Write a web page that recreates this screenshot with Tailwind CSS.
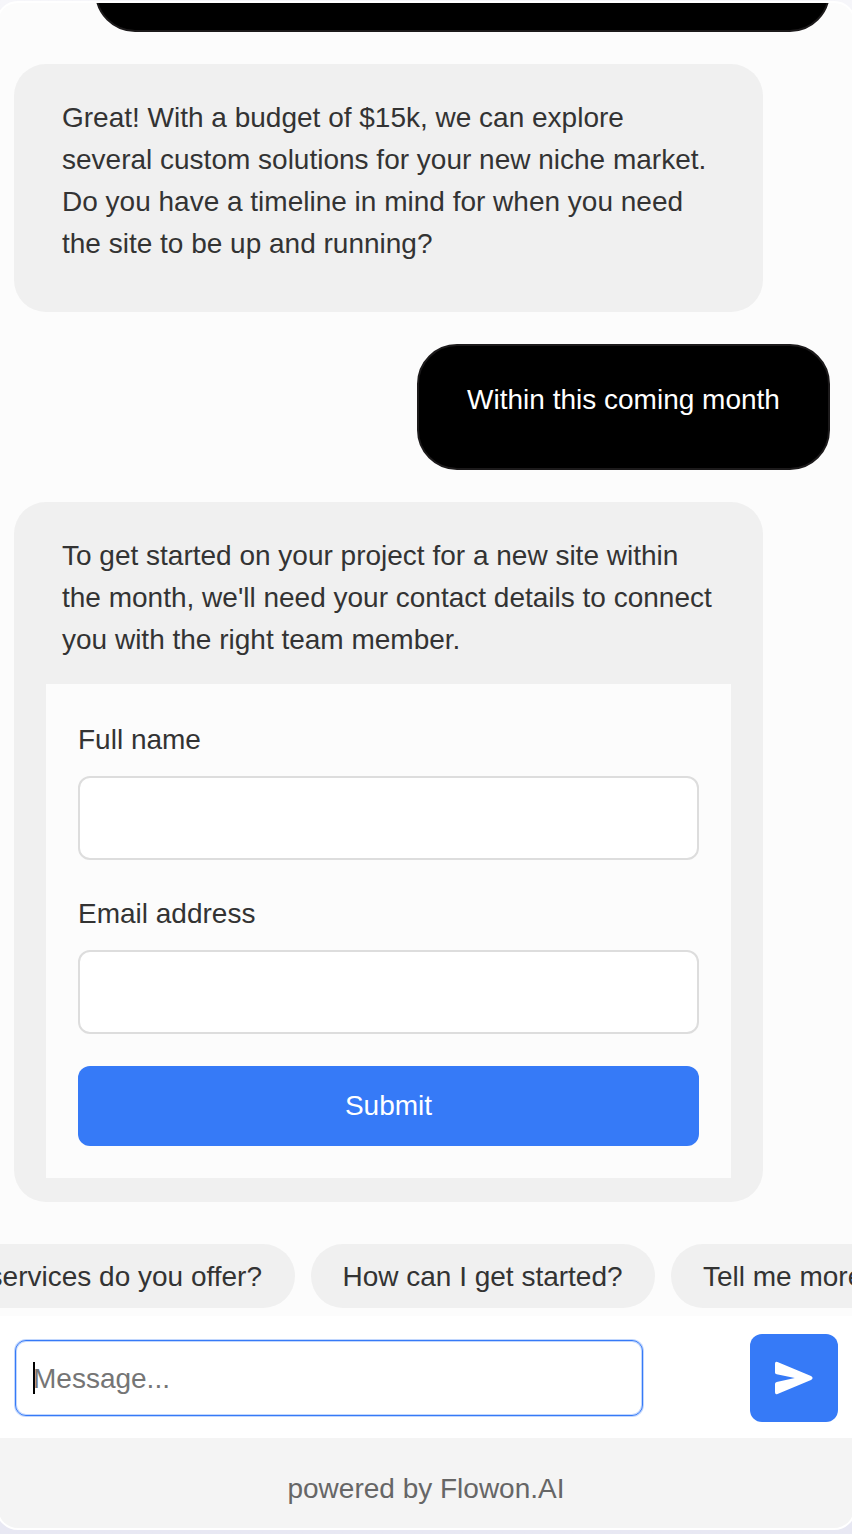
<!DOCTYPE html>
<html lang="en">
<head>
<meta charset="utf-8">
<title>Flowon.AI chat</title>
<script src="https://cdn.jsdelivr.net/npm/@tailwindcss/browser@4"></script>
</head>
<body class="h-[1534px] w-[852px] overflow-hidden bg-gradient-to-b from-[#f6f6fa] to-[#e8e8f3] pt-px font-['Liberation_Sans',Arial,sans-serif] text-[28px] leading-[42px] text-[#333]">
  <main class="-ml-1 flex h-[1529px] w-[860px] flex-col overflow-hidden rounded-[22px] border-2 border-white bg-white">
    <section class="flex h-[1313px] shrink-0 flex-col bg-[#fcfcfc] px-0.5">
      <div class="flex h-[1199px] flex-col gap-8 pl-3.5 pr-[22px]">
        <div class="flex h-[29px] w-[735px] shrink-0 items-end self-end overflow-hidden">
          <div class="h-[126px] w-full shrink-0 rounded-[40px] border-2 border-[#1c1a1b] bg-black"></div>
        </div>
        <div class="h-[248px] w-[749px] shrink-0 rounded-[32px] bg-[#f0f0f0] pl-12 pt-[33px]">
          <p>Great! With a budget of $15k, we can explore<br>several custom solutions for your new niche market.<br>Do you have a timeline in mind for when you need<br>the site to be up and running?</p>
        </div>
        <div class="h-[126px] w-[413px] shrink-0 self-end rounded-[40px] border-2 border-[#1c1a1b] bg-black pt-[33px] text-center text-white">Within this coming month</div>
        <div class="h-[700px] w-[749px] shrink-0 rounded-[32px] bg-[#f0f0f0] px-8 pt-[33px]">
          <p class="pl-4">To get started on your project for a new site within<br>the month, we'll need your contact details to connect<br>you with the right team member.</p>
          <form class="mt-[23px] flex h-[494px] flex-col bg-[#fcfcfc] px-8 pt-[35px]">
            <label for="name">Full name</label>
            <input id="name" class="mt-[15px] h-[84px] w-full rounded-xl border-2 border-[#ddd] bg-white px-4 outline-none">
            <label for="email" class="mt-[33px]">Email address</label>
            <input id="email" class="mt-[15px] h-[84px] w-full rounded-xl border-2 border-[#ddd] bg-white px-4 outline-none">
            <button type="button" class="mt-8 h-20 w-full rounded-xl bg-[#367af7] text-white">Submit</button>
          </form>
        </div>
      </div>
      <div class="mt-[42px] flex gap-4 whitespace-nowrap">
        <div class="flex h-16 w-[295px] shrink-0 items-center justify-end rounded-r-[32px] bg-[#f0f0f0] pr-[33px] pt-0.5"><span>What services do you offer?</span></div>
        <div class="flex h-16 w-[344px] shrink-0 items-center justify-center rounded-[32px] bg-[#f0f0f0] pr-px pt-0.5"><span>How can I get started?</span></div>
        <div class="flex h-16 w-[344px] shrink-0 items-center rounded-[32px] bg-[#f0f0f0] pl-8 pt-0.5"><span>Tell me more</span></div>
      </div>
    </section>
    <section class="flex h-[122px] shrink-0 items-start justify-between px-4 pt-[18px]">
      <div class="ml-px mt-[6px] flex h-[76px] w-[628px] items-center rounded-[11px] border border-[#367af7] bg-white pl-[17px] pt-0.5 text-[#757575] shadow-[0_0_0_1px_#367af74d,inset_0_0_0_1px_#367af74d]">
        <span class="-mt-0.5 h-8 w-0.5 bg-black"></span><span class="-ml-0.5">Message...</span>
      </div>
      <button type="button" aria-label="Send" class="flex size-[88px] items-center justify-center rounded-xl bg-[#367af7]">
        <svg class="size-[88px]" viewBox="0 0 88 88" fill="white"><path d="M25 29.8Q25 27.2 27.5 28L61 42Q64.2 44 61 46L27.5 60Q25 60.8 25 58.2V50Q25 48.4 26.7 48L44.8 44L26.7 40.3Q25 40 25 38.4Z"/></svg>
      </button>
    </section>
    <footer class="flex grow items-start justify-center bg-[#f4f4f4] pt-[30px] text-[#666]">powered by Flowon.AI</footer>
  </main>
</body>
</html>
